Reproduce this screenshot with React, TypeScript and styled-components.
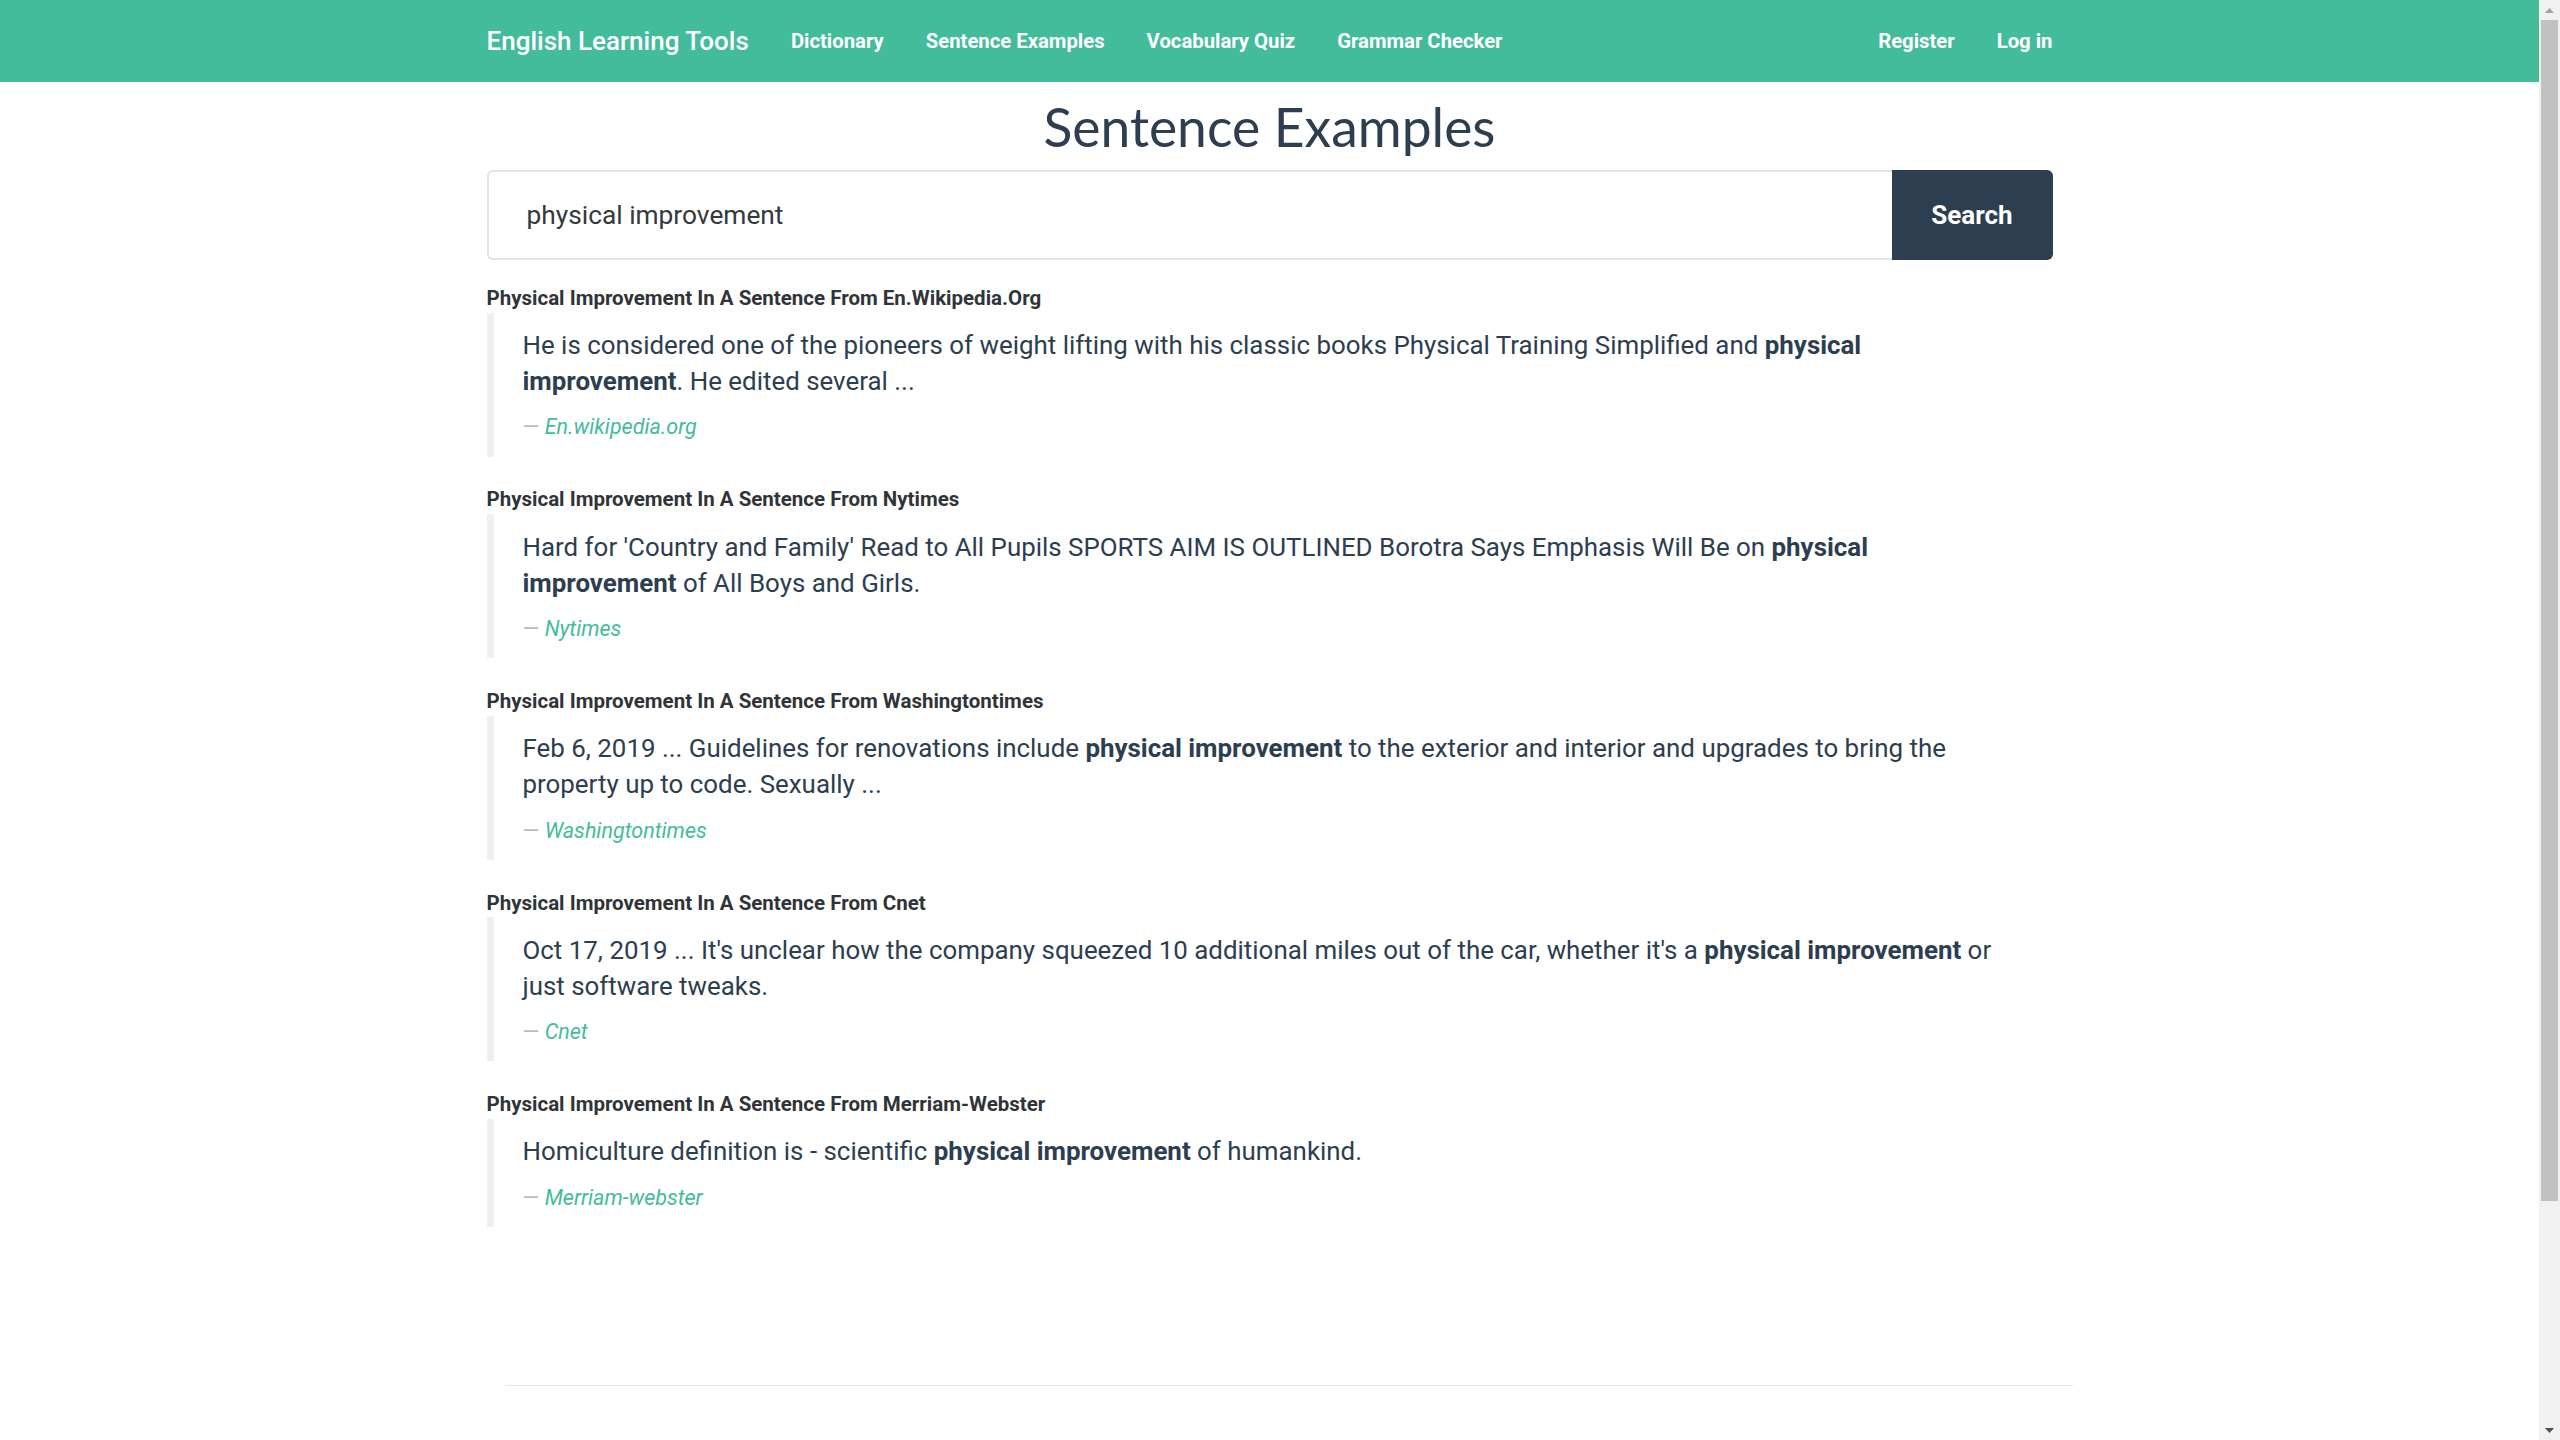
import React from "react";
import styled, { createGlobalStyle } from "styled-components";

const GlobalStyle = createGlobalStyle`
  html, body {
    margin: 0;
    padding: 0;
    background: #ffffff;
  }
  body {
    font-family: Roboto, "Liberation Sans", Arial, sans-serif;
    color: #2c3e50;
  }
  * {
    box-sizing: border-box;
  }
`;

const Viewport = styled.div`
  display: flex;
  align-items: flex-start;
`;

const Page = styled.div`
  flex: 1;
  min-width: 0;
`;

// classic browser scrollbar, kept in view while the page scrolls
const ScrollTrack = styled.div`
  position: sticky;
  top: 0;
  flex: none;
  width: 21px;
  height: 100vh;
  background: #f1f1f1;
  display: flex;
  flex-direction: column;
  align-items: center;
`;

const ScrollArrow = styled.div`
  height: 20px;
  display: flex;
  align-items: center;
  justify-content: center;
`;

const ScrollThumb = styled.div`
  width: 17px;
  height: 1181px;
  background: #c1c1c1;
`;

const ScrollRest = styled.div`
  flex: 1;
`;

const Container = styled.div`
  max-width: 1596px;
  margin: 0 auto;
  padding: 0 15px;
`;

const Navbar = styled.nav`
  background: #43bc9c;
  height: 82px;
`;

const NavInner = styled(Container)`
  display: flex;
  align-items: center;
  height: 100%;
`;

const Brand = styled.a`
  color: #ffffff;
  font-size: 26px;
  font-weight: 500;
  text-decoration: none;
  margin-right: 21px;
  white-space: nowrap;
`;

const NavList = styled.ul<{ $right?: boolean }>`
  display: flex;
  list-style: none;
  margin: 0 ${(p) => (p.$right ? "-21px" : "0")} 0 ${(p) => (p.$right ? "auto" : "0")};
  padding: 0;
`;

const NavLink = styled.a`
  display: block;
  padding: 0 21px;
  color: #ffffff;
  font-size: 20.3px;
  font-weight: 700;
  text-decoration: none;
  white-space: nowrap;
`;

const Title = styled.h1`
  font-family: Lato, "Liberation Sans", sans-serif;
  font-weight: 400;
  font-size: 53.4px;
  line-height: 59.4px;
  color: #2c3e50;
  text-align: center;
  margin: 15px 0 14px;
`;

const SearchForm = styled.form`
  display: flex;
  height: 90px;
  margin-bottom: 23.5px;
`;

const SearchInput = styled.input`
  flex: 1;
  min-width: 0;
  height: 100%;
  border: 2px solid #dce4ec;
  border-right: none;
  border-radius: 6px 0 0 6px;
  padding: 0 38px;
  font-family: Roboto, "Liberation Sans", sans-serif;
  font-size: 26.3px;
  color: #34393e;
  outline: none;
`;

const SearchButton = styled.button`
  width: 161px;
  height: 100%;
  border: none;
  border-radius: 0 6px 6px 0;
  background: #2c3e50;
  color: #ffffff;
  font-family: Roboto, "Liberation Sans", sans-serif;
  font-size: 26px;
  font-weight: 700;
  cursor: pointer;
`;

const ResultHeading = styled.div`
  font-size: 20.5px;
  font-weight: 700;
  line-height: 28.8px;
  color: #303438;
`;

const Quote = styled.blockquote`
  margin: 0 0 28.8px;
  padding: 14.4px 52px 14.4px 29px;
  border-left: 7px solid #ecf0f1;
`;

const QuoteText = styled.p`
  margin: 0 0 14.4px;
  font-size: 25.9px;
  line-height: 36px;
  color: #2c3e50;

  strong {
    font-weight: 700;
  }
`;

const QuoteFooter = styled.footer`
  font-size: 21.5px;
  line-height: 28.8px;
  color: #b4bcc2;
`;

const SourceLink = styled.a`
  color: #43bc9c;
  font-style: italic;
  text-decoration: none;
`;

const PageFooter = styled.footer`
  max-width: 1606px;
  margin: 158px auto 0;
  padding: 0 0 318px 38px;
`;

const Rule = styled.hr`
  margin: 0;
  border: none;
  border-top: 1px solid #e6e6e6;
`;

interface Example {
  source: string;
  before: string;
  after: string;
  cite: string;
}

const query = "physical improvement";

const examples: Example[] = [
  {
    source: "En.Wikipedia.Org",
    before:
      "He is considered one of the pioneers of weight lifting with his classic books Physical Training Simplified and ",
    after: ". He edited several ...",
    cite: "En.wikipedia.org",
  },
  {
    source: "Nytimes",
    before:
      "Hard for 'Country and Family' Read to All Pupils SPORTS AIM IS OUTLINED Borotra Says Emphasis Will Be on ",
    after: " of All Boys and Girls.",
    cite: "Nytimes",
  },
  {
    source: "Washingtontimes",
    before: "Feb 6, 2019 ... Guidelines for renovations include ",
    after:
      " to the exterior and interior and upgrades to bring the property up to code. Sexually ...",
    cite: "Washingtontimes",
  },
  {
    source: "Cnet",
    before:
      "Oct 17, 2019 ... It's unclear how the company squeezed 10 additional miles out of the car, whether it's a ",
    after: " or just software tweaks.",
    cite: "Cnet",
  },
  {
    source: "Merriam-Webster",
    before: "Homiculture definition is - scientific ",
    after: " of humankind.",
    cite: "Merriam-webster",
  },
];

const ExampleBlock: React.FC<Example> = ({ source, before, after, cite }) => (
  <section>
    <ResultHeading>Physical Improvement In A Sentence From {source}</ResultHeading>
    <Quote>
      <QuoteText>
        {before}
        <strong>{query}</strong>
        {after}
      </QuoteText>
      <QuoteFooter>
        {"\u2014\u00a0"}
        <SourceLink href="#">{cite}</SourceLink>
      </QuoteFooter>
    </Quote>
  </section>
);

const Scrollbar: React.FC = () => (
  <ScrollTrack>
    <ScrollArrow>
      <svg width="9" height="5" viewBox="0 0 9 5">
        <polygon points="0,5 4.5,0 9,5" fill="#a3a3a3" />
      </svg>
    </ScrollArrow>
    <ScrollThumb />
    <ScrollRest />
    <ScrollArrow>
      <svg width="9" height="5" viewBox="0 0 9 5">
        <polygon points="0,0 9,0 4.5,5" fill="#505050" />
      </svg>
    </ScrollArrow>
  </ScrollTrack>
);

const App: React.FC = () => (
  <Viewport>
    <GlobalStyle />
    <Page>
      <Navbar>
        <NavInner>
          <Brand href="#">English Learning Tools</Brand>
          <NavList>
            <li><NavLink href="#">Dictionary</NavLink></li>
            <li><NavLink href="#">Sentence Examples</NavLink></li>
            <li><NavLink href="#">Vocabulary Quiz</NavLink></li>
            <li><NavLink href="#">Grammar Checker</NavLink></li>
          </NavList>
          <NavList $right>
            <li><NavLink href="#">Register</NavLink></li>
            <li><NavLink href="#">Log in</NavLink></li>
          </NavList>
        </NavInner>
      </Navbar>
      <Container>
        <Title>Sentence Examples</Title>
        <SearchForm onSubmit={(e) => e.preventDefault()}>
          <SearchInput type="text" defaultValue={query} />
          <SearchButton type="submit">Search</SearchButton>
        </SearchForm>
        {examples.map((ex) => (
          <ExampleBlock key={ex.source} {...ex} />
        ))}
      </Container>
      <PageFooter>
        <Rule />
      </PageFooter>
    </Page>
    <Scrollbar />
  </Viewport>
);

export default App;
